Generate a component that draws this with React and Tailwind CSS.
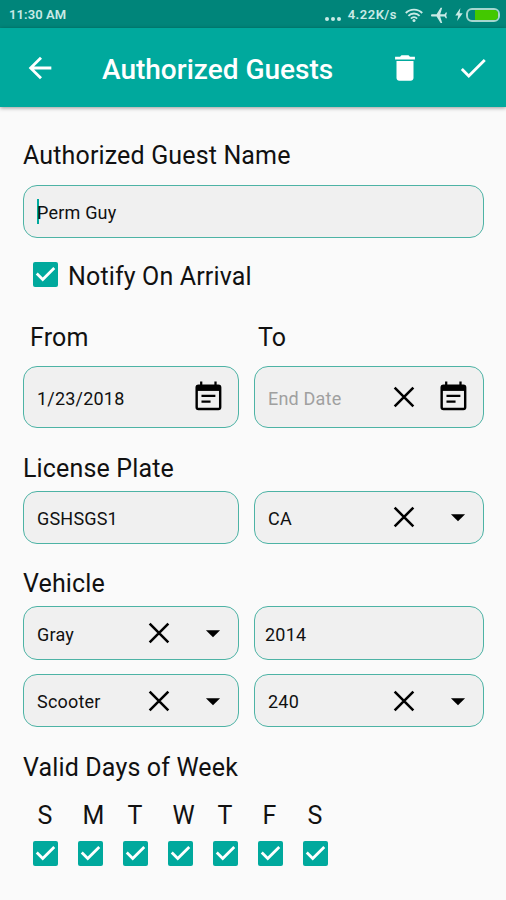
import { useState } from "react";
import { MdArrowBack, MdArrowDropDown, MdCheck, MdDelete } from "react-icons/md";

const days = ["S", "M", "T", "W", "T", "F", "S"];

function CloseIcon() {
  return (
    <svg viewBox="0 0 24 24" className="size-[34px] shrink-0" stroke="#000" strokeWidth="1.8" fill="none">
      <path d="M5.4 5.4l13.2 13.2M18.6 5.4L5.4 18.6" />
    </svg>
  );
}

function CalendarIcon() {
  return (
    <svg viewBox="0 0 24 24" className="size-[34px] shrink-0" stroke="#000" strokeWidth="1.7" fill="none">
      <rect x="4" y="4" width="16.6" height="16.5" rx="1.3" />
      <path d="M4 4h16.6v3.7H4z" fill="#000" stroke="none" />
      <path d="M7.2 1v3M17.3 1v3M7.4 11.2h9.8M7.4 15.2h6.4" strokeWidth="1.6" />
    </svg>
  );
}

function CheckBox({ checked, onClick }) {
  return (
    <button type="button" onClick={onClick} className="block size-[25px] shrink-0 rounded-[2px] bg-[#00a99d]">
      {checked && (
        <svg viewBox="3 3 18 18" className="size-[25px]" fill="#fff">
          <path d="M10 17l-5-5 1.41-1.41L10 14.17l7.59-7.59L19 8l-9 9z" />
        </svg>
      )}
    </button>
  );
}

function Label({ children, className = "" }) {
  return (
    <div className={`flex h-9 items-center pt-0.5 text-[25px] tracking-[0.15px] whitespace-nowrap ${className}`}>
      {children}
    </div>
  );
}

function Field({ children, className = "pl-[13px]" }) {
  return (
    <div className={`flex items-center rounded-[14px] border-[1.5px] border-[#4db3a5] bg-[#f0f0f0] text-[18px] tracking-[0.2px] ${className}`}>
      {children}
    </div>
  );
}

// field with a clear button and a dropdown arrow
function SelectField({ value, className = "" }) {
  return (
    <Field className={`justify-between pr-2 pl-[13px] ${className}`}>
      <span className="pt-0.5">{value}</span>
      <div className="flex items-center gap-5">
        <CloseIcon />
        <MdArrowDropDown className="size-[34px] text-black" />
      </div>
    </Field>
  );
}

function StatusBar() {
  return (
    <div className="flex h-[28px] items-center justify-between bg-[#00857a] pr-[6px] pl-[9px] text-[13px] font-semibold text-[#c9eae6]">
      <span className="pt-0.5 tracking-[0.1px]">11:30 AM</span>
      <div className="flex items-center pt-px">
        <div className="mt-2 mr-[7px] flex gap-[2px]">
          <i className="size-[4px] rounded-full bg-current" />
          <i className="size-[4px] rounded-full bg-current" />
          <i className="size-[4px] rounded-full bg-current" />
        </div>
        <span className="mr-[8px] pt-px tracking-[0.5px]">4.22K/s</span>
        <svg viewBox="0 0 18 14" className="mr-[8px] h-[14px] w-[18px]" fill="none" stroke="currentColor" strokeWidth="1.9">
          <path d="M.8 5a11.6 11.6 0 0116.4 0M3.4 7.9a7.9 7.9 0 0111.2 0M5.9 10.6a4.4 4.4 0 016.2 0" />
          <circle cx="9" cy="12.4" r="1.5" fill="currentColor" stroke="none" />
        </svg>
        <svg viewBox="2 2 20 20" className="mr-[8px] size-[16px] -rotate-90" fill="currentColor">
          <path d="M21 16v-2l-8-5V3.5c0-.83-.67-1.5-1.5-1.5S10 2.67 10 3.5V9l-8 5v2l8-2.5V19l-2 1.5V22l3.5-1 3.5 1v-1.5L13 19v-5.5l8 2.5z" />
        </svg>
        <svg viewBox="0 0 8 14" className="mr-[3px] h-[13px] w-[8px]" fill="currentColor">
          <path d="M5.5 0L0 8h3.2L2 14l6-8.4H4.6z" />
        </svg>
        <div className="flex h-[14px] w-[34px] justify-end rounded-[6px] border-2 border-[#a5d6cf]">
          <div className="w-[23px] rounded-r-[4px] bg-[#43c800]" />
        </div>
      </div>
    </div>
  );
}

export default function App() {
  const [notify, setNotify] = useState(true);
  const [validDays, setValidDays] = useState([true, true, true, true, true, true, true]);

  const toggleDay = (index) => {
    setValidDays((prev) => prev.map((day, i) => (i === index ? !day : day)));
  };

  return (
    <div className="h-[900px] w-[506px] overflow-hidden bg-[#fafafa] font-[Roboto,sans-serif] text-[#111]">
      <StatusBar />
      <header className="flex h-[79px] items-center bg-[#00a99d] pr-4 pl-[23px] text-white shadow-[0_1px_4px_rgba(0,0,0,0.4)]">
        <MdArrowBack className="size-[34px]" />
        <h1 className="ml-[45px] flex-1 pt-1 text-[28px] font-medium whitespace-nowrap">Authorized Guests</h1>
        <MdDelete className="mr-[34px] size-[34px]" />
        <MdCheck className="size-[34px]" />
      </header>

      <main className="pt-[30px] pr-[22px] pl-[23px]">
        <Label>Authorized Guest Name</Label>
        <Field className="mt-3 h-[53px] pl-[13px]">
          <span className="-mr-0.5 h-[25px] w-0.5 bg-[#00a99d]" />
          <span className="pt-0.5">Perm Guy</span>
        </Field>

        <div className="mt-5 flex h-9 items-center pl-[10px]">
          <div className="pb-[3px]">
            <CheckBox checked={notify} onClick={() => setNotify(!notify)} />
          </div>
          <Label className="ml-[10px]">Notify On Arrival</Label>
        </div>

        <div className="mt-[25px] grid grid-cols-[216px_230px] gap-x-[15px]">
          <Label className="pl-[7px]">From</Label>
          <Label className="pl-[4px]">To</Label>
        </div>
        <div className="mt-[11px] grid grid-cols-[216px_230px] gap-x-[15px]">
          <Field className="h-[62px] justify-between pr-[13px] pl-[13px]">
            <span className="pt-0.5">1/23/2018</span>
            <CalendarIcon />
          </Field>
          <Field className="h-[62px] justify-between pr-[13px] pl-[13px]">
            <span className="pt-0.5 text-[#a0a0a0]">End Date</span>
            <div className="flex gap-[15px]">
              <CloseIcon />
              <CalendarIcon />
            </div>
          </Field>
        </div>

        <Label className="mt-[22px]">License Plate</Label>
        <div className="mt-[5px] grid grid-cols-[216px_230px] gap-x-[15px]">
          <Field className="h-[53px] pl-[13px]">
            <span className="pt-px">GSHSGS1</span>
          </Field>
          <SelectField value="CA" className="h-[53px] pb-px" />
        </div>

        <Label className="mt-[21px]">Vehicle</Label>
        <div className="mt-[5px] grid grid-cols-[216px_230px] gap-x-[15px] gap-y-[14px]">
          <SelectField value="Gray" className="h-[54px]" />
          <Field className="h-[54px] pl-[10px]">
            <span className="pt-0.5">2014</span>
          </Field>
          <SelectField value="Scooter" className="h-[53px]" />
          <SelectField value="240" className="h-[53px]" />
        </div>

        <Label className="mt-[22px]">Valid Days of Week</Label>
        <div className="mt-3 flex gap-5 pl-[10px]">
          {days.map((day, i) => (
            <div key={i} className="w-[25px]">
              <Label className="pl-[4.5px]">{day}</Label>
              <div className="mt-2">
                <CheckBox checked={validDays[i]} onClick={() => toggleDay(i)} />
              </div>
            </div>
          ))}
        </div>
      </main>
    </div>
  );
}
